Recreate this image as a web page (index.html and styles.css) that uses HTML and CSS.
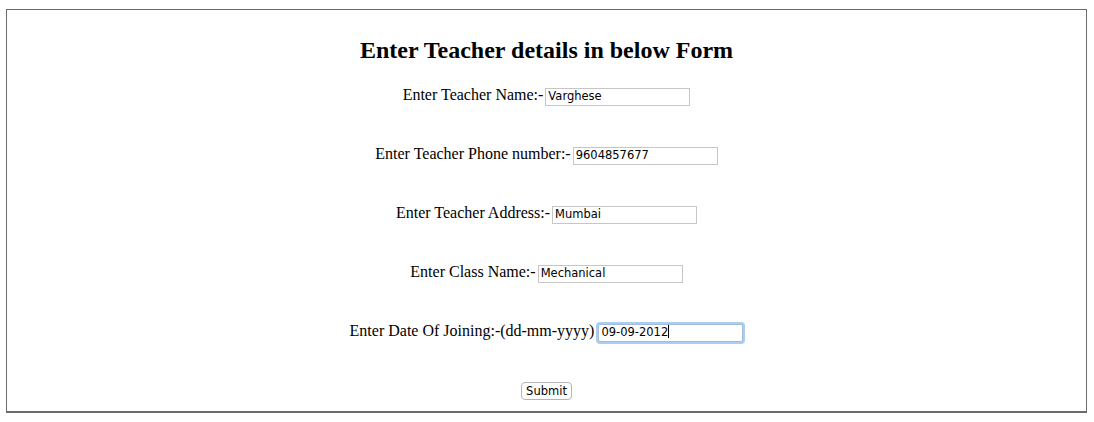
FILE: index.html
```html
<!DOCTYPE html>
<html>
<head>
<meta charset="utf-8">
<title>Teacher details</title>
<link rel="stylesheet" href="styles.css">
</head>
<body>
<div class="frame">
  <h2 class="title">Enter Teacher details in below Form</h2>
  <form class="form">
    <div class="row"><label>Enter Teacher Name:-</label><input class="field" type="text" value="Varghese"></div>
    <div class="row"><label>Enter Teacher Phone number:-</label><input class="field" type="text" value="9604857677"></div>
    <div class="row"><label>Enter Teacher Address:-</label><input class="field" type="text" value="Mumbai"></div>
    <div class="row"><label>Enter Class Name:-</label><input class="field" type="text" value="Mechanical"></div>
    <div class="row"><label>Enter Date Of Joining:-(dd-mm-yyyy)</label><span class="focus-wrap"><input class="field focused" type="text" value="09-09-2012"><span class="caret"></span></span></div>
    <div class="row row-submit"><button class="submit" type="button">Submit</button></div>
  </form>
</div>
</body>
</html>
```

FILE: styles.css
```css
html, body {
  margin: 0;
  padding: 0;
  background: #ffffff;
}

body {
  font-family: "Liberation Serif", "Times New Roman", serif;
  font-size: 16px;
  color: #000000;
}

.frame {
  margin: 9px 7px 0 6px;
  width: 1079px;
  height: 401px;
  border: 1px solid #6b6b6b;
  border-bottom-width: 2px;
  display: flex;
  flex-direction: column;
  align-items: center;
}

.title {
  margin: 27px 0 0 0;
  font-size: 24px;
  font-weight: bold;
  line-height: 27px;
}

.form {
  margin-top: 22px;
  display: flex;
  flex-direction: column;
  align-items: center;
  gap: 41px;
  width: 100%;
}

.row {
  height: 18px;
  display: flex;
  align-items: baseline;
  justify-content: center;
  gap: 2px;
}

.row-submit {
  margin-top: 1px;
}

.field {
  box-sizing: border-box;
  width: 145px;
  height: 18px;
  margin: 0;
  padding: 0 2px 1px 2px;
  border: 1px solid #c6c6c6;
  font-family: "DejaVu Sans", "Liberation Sans", sans-serif;
  font-size: 11.5px;
  color: #000000;
  background: #ffffff;
  outline: none;
}

.focus-wrap {
  position: relative;
  display: inline-block;
  margin-left: 2px;
}

.focused {
  border-color: #a5bcd6;
  border-radius: 2px;
  box-shadow: 0 0 0 2px #a9cdf3;
}

.caret {
  position: absolute;
  left: 70px;
  top: 3px;
  width: 1px;
  height: 13px;
  background: #000000;
}

.submit {
  box-sizing: border-box;
  width: 51px;
  height: 18px;
  margin: 0;
  padding: 0;
  border: 1px solid #b4b4b4;
  border-radius: 4px;
  background: #ffffff;
  font-family: "DejaVu Sans", "Liberation Sans", sans-serif;
  font-size: 11.5px;
  color: #000000;
}
```
